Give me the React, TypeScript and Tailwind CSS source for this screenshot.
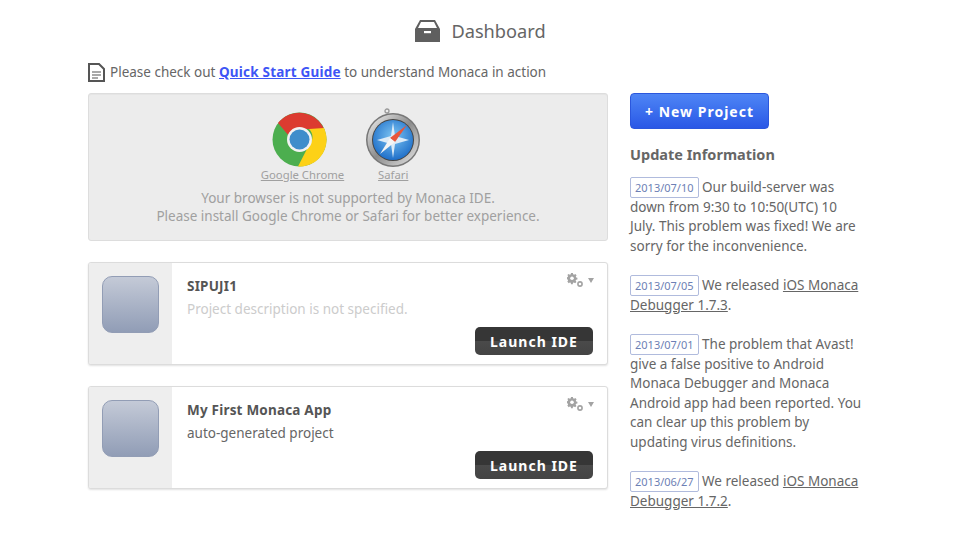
const updates = [
  {
    date: "2013/07/10",
    body: <> Our build-server was down from 9:30 to 10:50(UTC) 10 July. This problem was fixed! We are sorry for the inconvenience.</>,
  },
  {
    date: "2013/07/05",
    body: <> We released <a href="#" className="underline">iOS Monaca Debugger 1.7.3</a>.</>,
  },
  {
    date: "2013/07/01",
    body: <> The problem that Avast! give a false positive to Android Monaca Debugger and Monaca Android app had been reported. You can clear up this problem by updating virus definitions.</>,
  },
  {
    date: "2013/06/27",
    body: <> We released <a href="#" className="underline">iOS Monaca Debugger 1.7.2</a>.</>,
  },
];

function ChromeIcon() {
  return (
    <svg width="55" height="55" viewBox="0 0 55 55" className="mr-[7px] block">
      <circle cx="27.5" cy="27.5" r="27" fill="#4cae4f" />
      <path d="M6 11 A27 27 0 0 1 52 17 L27.5 17 A11 11 0 0 0 17 24 Z" fill="#dc3b30" />
      <path d="M52 16 A27 27 0 0 1 26 54.5 L37 33 A11 11 0 0 0 37 17 Z" fill="#fdd117" />
      <circle cx="27.5" cy="27.5" r="12.5" fill="#f2f2f2" />
      <circle cx="27.5" cy="27.5" r="10" fill="#3f8dcb" />
    </svg>
  );
}

function SafariIcon() {
  return (
    <svg width="54" height="59" viewBox="0 0 54 59" className="block">
      <defs>
        <linearGradient id="bezel" x1="0" y1="0" x2="1" y2="1">
          <stop offset="0" stopColor="#f4f4f4" />
          <stop offset="0.5" stopColor="#8c8c8c" />
          <stop offset="1" stopColor="#e8e8e8" />
        </linearGradient>
        <radialGradient id="dial" cx="0.5" cy="0.4" r="0.6">
          <stop offset="0" stopColor="#7cc4f2" />
          <stop offset="1" stopColor="#1f6fc9" />
        </radialGradient>
      </defs>
      <circle cx="21" cy="3" r="2" fill="none" stroke="#999" strokeWidth="1.300" />
      <circle cx="27" cy="32" r="27" fill="#777" />
      <circle cx="27" cy="32" r="25.500" fill="url(#bezel)" />
      <circle cx="27" cy="32" r="21" fill="#444" />
      <circle cx="27" cy="32" r="20" fill="url(#dial)" />
      <path d="M27 14 L29 28 L43 32 L29 36 L27 50 L25 36 L11 32 L25 28 Z" fill="#dcebf7" />
      <path d="M41 17 L24 30 L29 34 Z" fill="#e8553a" />
      <path d="M14 46 L24 30 L29 34 Z" fill="#f4f4f4" />
    </svg>
  );
}

function GearIcon() {
  return (
    <svg width="16" height="14" viewBox="0 0 16 14" fill="#a3a3a3">
      <path d="M5 0h2.400l.3 1.700 1.200.5L10.300 1.200 12 2.900l-1 1.400.5 1.200 1.500.3v2.400l-1.700.3-.5 1.200 1 1.400-1.700 1.700-1.400-1-1.200.5-.3 1.700H5l-.3-1.700-1.200-.5-1.400 1L.4 10.700l1-1.400-.5-1.200L-.800 7.800V5.400l1.700-.3.500-1.200-1-1.400L2.100 1.200l1.400 1 1.200-.5z" transform="scale(.8)" />
      <circle cx="5" cy="5.300" r="1.800" fill="#fff" />
      <circle cx="13" cy="11" r="2.100" fill="none" stroke="#a3a3a3" strokeWidth="1.600" />
    </svg>
  );
}

function ProjectCard({ name, desc, muted }: { name: string; desc: string; muted?: boolean }) {
  return (
    <div className="flex h-[103px] overflow-hidden rounded-[3px] border border-[#dcdcdc] bg-white shadow-[0_1px_2px_rgba(0,0,0,0.12)]">
      <div className="w-[83px] shrink-0 bg-[#eeeeee] pl-[13px] pt-[13px]">
        <div className="h-[57px] w-[57px] rounded-[10px] border border-[#929db5] bg-gradient-to-b from-[#c4cad7] to-[#919db6]" />
      </div>
      <div className="flex flex-1 flex-col pl-[15px] pr-[14px]">
        <div className="-mr-[1px] flex h-[24px] items-end justify-end gap-[5px]">
          <GearIcon />
          <span className="h-0 w-0 -translate-y-[4px] border-x-[3px] border-t-[5px] border-x-transparent border-t-[#a3a3a3]" />
        </div>
        <div className="mt-[-11px] font-bold leading-[20px] tracking-[0.2px] text-[#555]">{name}</div>
        <div className={`mt-[3px] leading-[20px] ${muted ? "text-[#cccccc]" : "text-[#666]"}`}>{desc}</div>
        <div className="mt-[8px] flex justify-end">
          <button className="h-[28px] w-[118px] rounded-[5px] bg-[linear-gradient(#363636_0,#363636_50%,#4a4a4a_50%,#444_100%)] text-[14px] font-bold tracking-[1px] text-white">
            Launch IDE
          </button>
        </div>
      </div>
    </div>
  );
}

export default function App() {
  return (
    <div className="min-h-[535px] bg-white font-['Noto_Sans',sans-serif] text-[13.500px] text-[#666]">
      <div className="flex h-[62px] items-center justify-center gap-[11px] pr-[4px]">
        <svg width="25" height="22" viewBox="0 0 25 22" fill="#5f5f5f">
          <path d="M5 0h15l5 9v13H0V9zM6 2L3 8h19l-3-6z" fillRule="evenodd" />
          <rect x="9" y="11" width="7" height="2.200" fill="#fff" />
        </svg>
        <h1 className="text-[18.200px] font-normal leading-none text-[#666]">Dashboard</h1>
      </div>

      <div className="flex gap-[22px] pl-[88px]">
        <div className="w-[520px]">
          <div className="flex h-[31px] items-start gap-[5px]">
            <svg width="17" height="19" viewBox="0 0 17 19" className="mt-[1px]" fill="none" stroke="#555" strokeWidth="2">
              <path d="M1 1h10l5 5v12H1z" />
              <path d="M4 9h9M4 12h9M4 15h6" strokeWidth="1.200" />
            </svg>
            <p className="leading-[20px]">
              Please check out{" "}
              <a href="#" className="font-bold tracking-[0.2px] text-[#3e55f5] underline">Quick Start Guide</a>{" "}
              to understand Monaca in action
            </p>
          </div>

          <div className="h-[148px] rounded-[3px] border border-[#dddddd] bg-[#ececec] pt-[14px] text-center text-[#a0a0a0] shadow-[inset_0_1px_1px_rgba(0,0,0,0.03)]">
            <div className="flex justify-center gap-[22px] pr-[15px]">
              <a href="#" className="flex flex-col items-center pt-[4px] text-[11.300px] leading-[16px] underline">
                <ChromeIcon />
                <span>Google Chrome</span>
              </a>
              <a href="#" className="flex flex-col items-center text-[11.300px] leading-[16px] underline">
                <SafariIcon />
                <span>Safari</span>
              </a>
            </div>
            <p className="mt-[6px] leading-[18px]">Your browser is not supported by Monaca IDE.</p>
            <p className="leading-[18px]">Please install Google Chrome or Safari for better experience.</p>
          </div>

          <div className="mt-[21px] flex flex-col gap-[21px]">
            <ProjectCard name="SIPUJI1" desc="Project description is not specified." muted />
            <ProjectCard name="My First Monaca App" desc="auto-generated project" />
          </div>
        </div>

        <div className="w-[235px] pt-[31px]">
          <button className="h-[36px] w-[139px] rounded-[4px] border border-[#2b57dd] bg-gradient-to-b from-[#4f85f5] to-[#2a57e6] text-[14px] font-bold tracking-[1px] text-white">
            + New Project
          </button>
          <h2 className="mt-[15px] text-[14.500px] font-bold leading-[20px] text-[#666]">Update Information</h2>
          <div className="mt-[14px] flex flex-col gap-[20px]">
            {updates.map((u) => (
              <p key={u.date} className="leading-[19.500px]">
                <span className="-my-[2px] inline-block rounded-[2px] border border-[#b0bbdd] px-[4px] text-[11px] leading-[19px] text-[#6d7fb5]">
                  {u.date}
                </span>
                {u.body}
              </p>
            ))}
          </div>
        </div>
      </div>
    </div>
  );
}
